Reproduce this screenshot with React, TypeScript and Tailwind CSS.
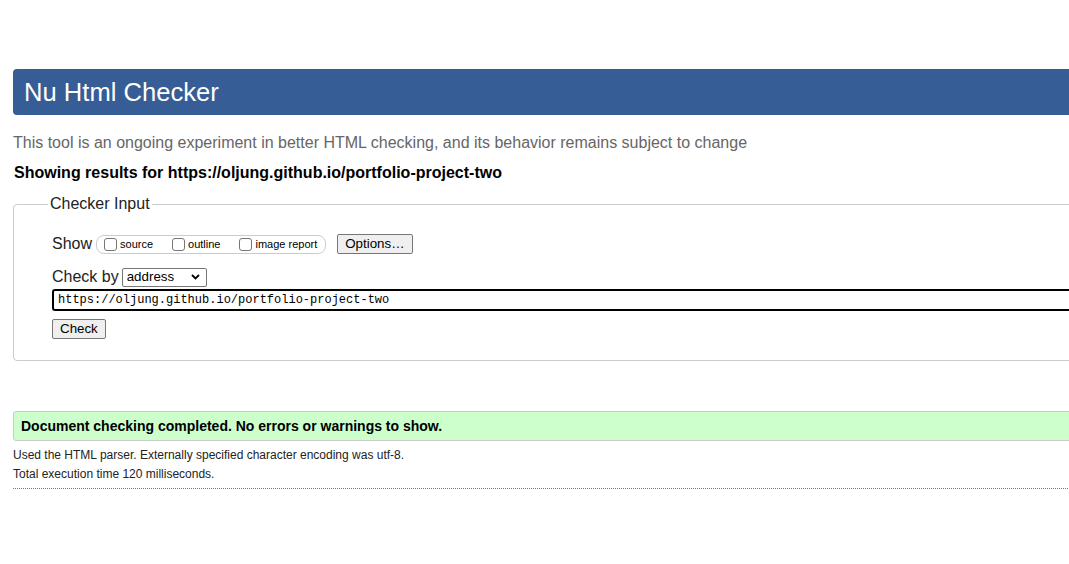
import React from "react";

const checks = ["source", "outline", "image report"];

function Checkbox({ label }: { label: string }) {
  return (
    <label className="flex items-center">
      <input
        type="checkbox"
        className="appearance-none w-[13px] h-[13px] border border-[#767676] rounded-[3px] bg-white mr-[3px]"
      />
      <span className="text-[11px] leading-[13px] text-black">{label}</span>
    </label>
  );
}

export default function App() {
  return (
    <div className="w-full h-[564px] overflow-hidden bg-white font-['Liberation_Sans',Arial,sans-serif]">
      <div className="w-[1120px] pl-[13px] pt-[69px]">
        {/* Title bar */}
        <h1 className="h-[46px] flex items-center pl-[11px] rounded-[4px] bg-[#365d95] text-white text-[25.6px] font-normal">
          Nu Html Checker
        </h1>

        <p className="mt-[19px] text-[16px] leading-[18px] text-[#666]">
          This tool is an ongoing experiment in better HTML checking, and its behavior remains subject to change
        </p>
        <p className="mt-[12px] text-[16px] leading-[18px] font-bold text-black pl-[1px]">
          Showing results for https://oljung.github.io/portfolio-project-two
        </p>

        {/* Checker Input */}
        <fieldset className="mt-[13px] border border-[#ccc] rounded-[4px] pl-[38px] pt-[21px] pb-[20px]">
          <legend className="-ml-[4px] px-[2px] text-[16px] leading-[18px] text-[#222]">Checker Input</legend>

          <div className="flex items-center h-[20px]">
            <span className="text-[16px] leading-[18px] text-[#222]">Show</span>
            <div className="ml-[4px] h-[19px] flex items-center gap-[19px] border border-[#ccc] rounded-lg pl-[7px] pr-[8px]">
              {checks.map((c) => (
                <Checkbox key={c} label={c} />
              ))}
            </div>
            <button className="ml-[11px] h-[20px] px-[7px] border border-[#767676] rounded-[2px] bg-[#efefef] text-[13.33px] leading-[16px] text-black">
              Options…
            </button>
          </div>

          <div className="mt-[13px] flex items-center h-[20px]">
            <span className="text-[16px] leading-[18px] text-[#222]">Check by</span>
            <div className="ml-[3px] w-[85px] h-[19px] flex items-center justify-between border border-[#767676] rounded-[2px] pl-[4px] pr-[6px] text-[13.33px] text-black">
              <span>address</span>
              <svg width="9" height="6" viewBox="0 0 9 6" fill="none">
                <path d="M1 1l3.5 3.5L8 1" stroke="#000" strokeWidth="1.8" />
              </svg>
            </div>
          </div>

          <div className="mt-[2px] h-[22px] flex items-center border-2 border-black rounded-[3px] pl-[4px]">
            <span className="font-['Liberation_Mono',monospace] text-[12px] text-black">
              https://oljung.github.io/portfolio-project-two
            </span>
          </div>

          <button className="mt-[8px] h-[20px] px-[7px] border border-[#767676] rounded-[2px] bg-[#efefef] text-[13.33px] leading-[16px] text-black">
            Check
          </button>
        </fieldset>

        {/* Result */}
        <div className="mt-[50px] h-[30px] flex items-center pl-[7px] border border-[#ccc] rounded-[3px] bg-[#ccffcc]">
          <span className="text-[14px] font-bold text-black">
            Document checking completed. No errors or warnings to show.
          </span>
        </div>

        <div className="mt-[5px] text-[12px] leading-[19px] text-[#222]">
          <p>Used the HTML parser. Externally specified character encoding was utf-8.</p>
          <p>Total execution time 120 milliseconds.</p>
        </div>
        <div className="mt-[4px] border-t border-dotted border-[#777]" />
      </div>
    </div>
  );
}
